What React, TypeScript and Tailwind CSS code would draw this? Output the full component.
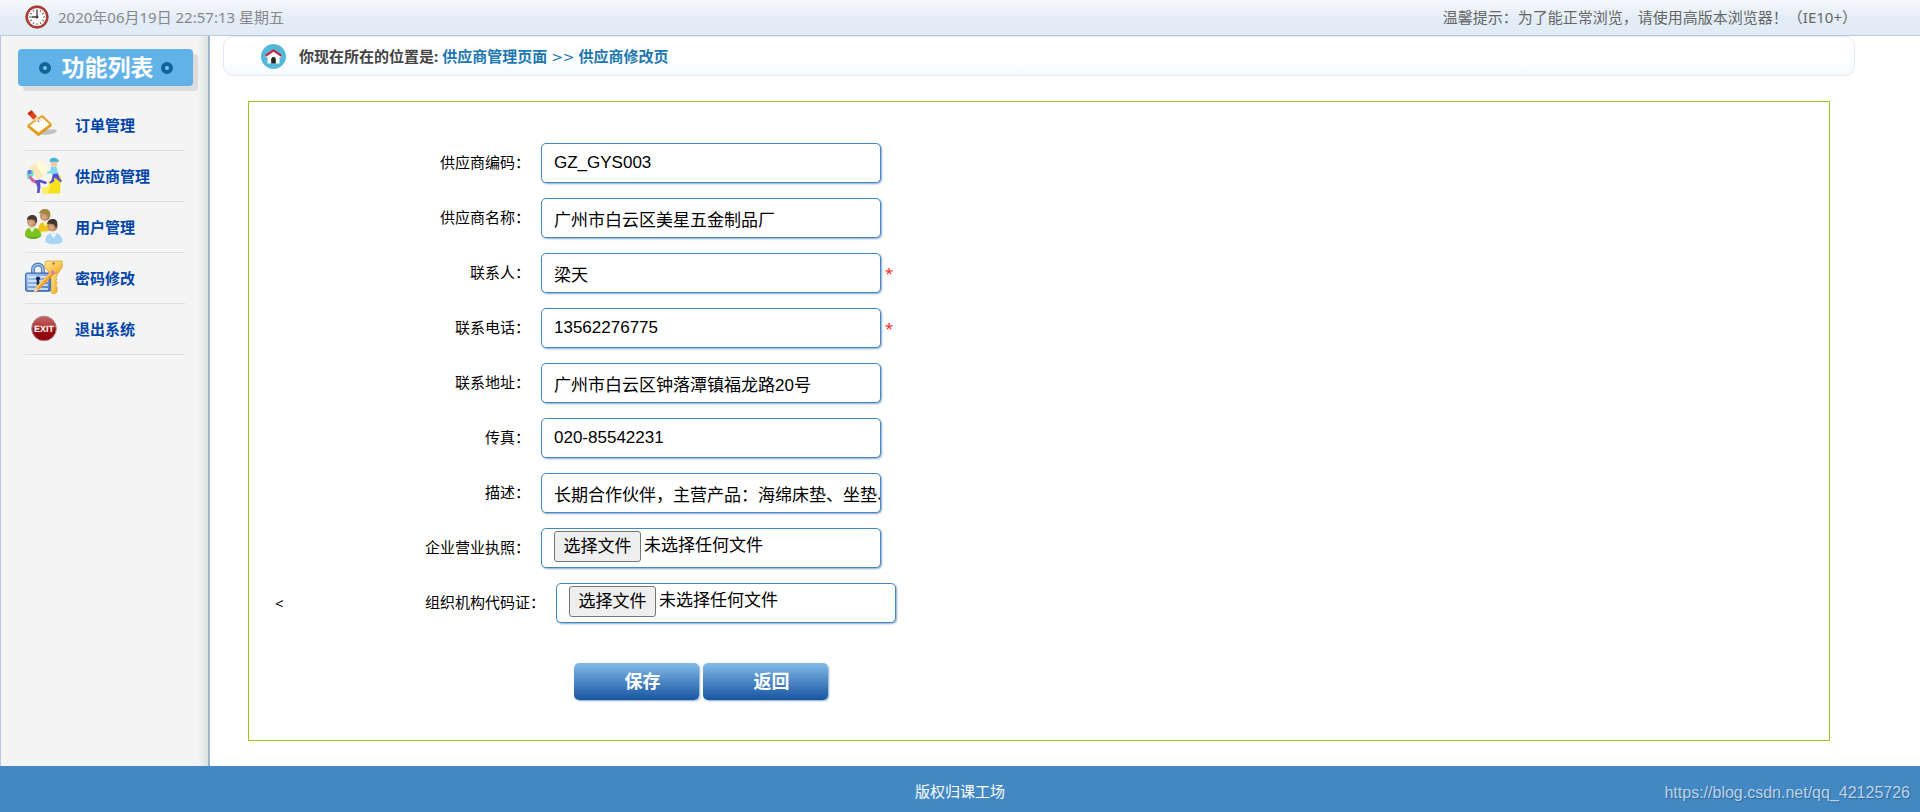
import { useRef, useState } from "react";
import type { ReactNode } from "react";

function ClockIcon() {
  const ticks = [0, 30, 60, 90, 120, 150, 180, 210, 240, 270, 300, 330];
  return (
    <svg viewBox="0 0 24 24" className="size-6" aria-hidden="true">
      <circle cx="12" cy="12" r="10.2" fill="#fdfdfd" stroke="#b23a30" strokeWidth="2.200" />
      <circle cx="12" cy="12" r="11.3" fill="none" stroke="#8e2b25" strokeWidth="0.600" />
      {ticks.map((a) => (
        <line key={a} x1="12" y1="4" x2="12" y2="6" stroke="#666" strokeWidth="1" transform={`rotate(${a} 12 12)`} />
      ))}
      <path d="M12 5.500V12H6.500" fill="none" stroke="#3d3d3d" strokeWidth="1.300" />
      <circle cx="12" cy="12" r="1.500" fill="#4a3a3a" />
    </svg>
  );
}

function HomeIcon() {
  return (
    <svg viewBox="0 0 25 25" className="size-[25px]" aria-hidden="true">
      <circle cx="12.5" cy="12.5" r="12.5" fill="#53b8d8" />
      <path d="M6.5 12 12.5 7.500l6 4.500v7.500h-12z" fill="#fff" />
      <path d="M4.800 12.800 12.500 7l7.700 5.800" fill="none" stroke="#fff" strokeWidth="2.500" />
      <path d="M4.600 11.800 12.500 6.500l7.900 5.300" fill="none" stroke="#c8183c" strokeWidth="2" />
      <path d="M10.200 19.500v-4.300a2.300 2.300 0 0 1 4.600 0v4.300z" fill="#222" />
    </svg>
  );
}

function OrderIcon() {
  return (
    <svg viewBox="0 0 38 38" className="size-[38px]" aria-hidden="true">
      <ellipse cx="23" cy="26" rx="9" ry="2.600" fill="#b5b5b5" opacity="0.800" transform="rotate(-8 23 26)" />
      <path d="M3 19.500 17 10 26 18.500 13.500 27.500z" fill="#fffdf6" stroke="#eaa126" strokeWidth="2" strokeLinejoin="round" />
      <path d="M3 20.500 13.500 29 26 19.500" fill="none" stroke="#e09a1c" strokeWidth="2" strokeLinejoin="round" />
      <path d="m14 12.500 2 2m.5-3.500 2 2m.5-2.500 1.500 2" stroke="#c9a36a" strokeWidth="1" />
      <path d="m2.500 7.500 4-3.200 5.500 6.200-3.500 3.300z" fill="#e2401b" />
      <path d="m2.500 7.500 4-3.200 1.600 2-3.800 3z" fill="#c22a10" />
      <path d="m8.500 13.800 3.500-3.300 2.600 6z" fill="#f6d19b" />
      <path d="m13.200 15.200.6-.9.800 2.200z" fill="#333" />
    </svg>
  );
}

function SupplierIcon() {
  return (
    <svg viewBox="0 0 38 38" className="size-[38px]" aria-hidden="true">
      <path d="M17 36.500v-6h6v-6h6v-4l6-2.500 1 2-1 16.500z" fill="#f6e21c" />
      <path d="M17 36.500v-6h6v-6h4l-2 6-3 6z" fill="#fbf06a" />
      <path d="M4 10.500 17 3l7 12-11.500 8z" fill="#fbe8b8" />
      <path d="M17 3l7 12-6 4-7.500-12.500z" fill="#fffbd8" />
      <path d="M1.500 17c1-3.500 4-5 6.500-3.500l1 4-3.500 4-3 1z" fill="#6fe0c8" />
      <path d="m4.500 18 5.500 5 3 1.500-1 2.500-5-2-3-4z" fill="#d65fa8" />
      <circle cx="4.500" cy="15" r="2.200" fill="#6a7be8" />
      <path d="m10 23.500 5-1 7 2.500-1 2.200-6-1.700.5 4.500-1 6h-2.500l.5-5.500z" fill="#5a50c8" />
      <circle cx="29" cy="6.500" r="3.400" fill="#f7caa0" />
      <path d="M24.500 4.800c0-3 2.500-4.500 5.500-3.800 2.800.5 4 2 3.800 4l-4.800-.3z" fill="#41b4dc" />
      <path d="m26 9.800 5.500.2 2 7-5 2-3-3-3 1-.8-2 3.500-1z" fill="#7ed9ee" />
      <path d="m28 17 5-.5 1.500 4.500 2.500 3-1.500 1.200-4-3.500-2.500-1 .3 3.500-4 2.500-1-1.200 2.200-2.500z" fill="#5650d0" />
    </svg>
  );
}

function UsersIcon() {
  return (
    <svg viewBox="0 0 38 38" className="size-[38px]" aria-hidden="true">
      <defs>
        <radialGradient id="skin" cx="0.400" cy="0.600" r="0.700">
          <stop offset="0" stopColor="#e6b48c" />
          <stop offset="1" stopColor="#9a6a48" />
        </radialGradient>
      </defs>
      <path d="M13 24c-.5-6 2.500-10 6.500-10s6 4 6 9z" fill="#f0c517" />
      <path d="m18 14 2.500 5 2-5z" fill="#fff3c0" />
      <circle cx="20" cy="8" r="5" fill="url(#skin)" />
      <path d="M14 5.500c1-4 4.500-5 7-4.500 3.500.7 5 3.500 4.300 7L23.500 10c0-3.500-3-5-9.500-4.500z" fill="#a5883f" />
      <path d="M0 28c-.5-6 2.500-8.500 7-8.500 5.500 0 9 3 9.500 8.500-4.500 3.800-12 3.800-16.500 0z" fill="#7ec31f" />
      <path d="m4.500 20 2.500 4.500 3-4.500z" fill="#e9f7d0" />
      <path d="M1 28c4 2 10 2 14.500 0-4 3.500-11 3.500-14.500 0z" fill="#4e9010" />
      <circle cx="7" cy="14" r="4.800" fill="url(#skin)" />
      <path d="M2 12c0-3.500 2.500-5 5.500-5s5.500 2.500 4.500 7l-1.500.8c0-3-3-3.800-8.500-2.800z" fill="#4a3b33" />
      <path d="M20.500 34c-.5-6.500 3-9 8-9 5.500 0 9 3 9 9-4.500 3-12.500 3-17 0z" fill="#a9d4f8" />
      <path d="m25.500 25.500 3 5 3-5z" fill="#f4faff" />
      <circle cx="27.500" cy="18.500" r="5" fill="url(#skin)" />
      <path d="M22 16c.5-4 3.500-5.500 6.500-5 3.500.5 4.500 3.500 3.500 8l-1.500 1c0-3.500-3-4.800-8.500-4z" fill="#43352e" />
    </svg>
  );
}

function PasswordIcon() {
  return (
    <svg viewBox="0 0 38 38" className="size-[38px]" aria-hidden="true">
      <defs>
        <linearGradient id="lockBody" x1="0" y1="0" x2="1" y2="1">
          <stop offset="0" stopColor="#b8d4f8" />
          <stop offset="1" stopColor="#4479c8" />
        </linearGradient>
        <linearGradient id="keyBody" x1="0" y1="0" x2="1" y2="1">
          <stop offset="0" stopColor="#ffee9a" />
          <stop offset="1" stopColor="#efa920" />
        </linearGradient>
      </defs>
      <path d="M8 15v-4.500a5 5 0 0 1 10 0V15" fill="none" stroke="#4b77b8" strokeWidth="3.800" />
      <path d="M8 15v-4.500a5 5 0 0 1 10 0V15" fill="none" stroke="#a7c6ee" strokeWidth="1.600" />
      <path d="M26 13h6v4l-1.200 1.500L32 20l-1.200 2 1.200 2-1.200 2 1.200 2v5l-3 2-3-1.500z" fill="url(#keyBody)" stroke="#d9951c" strokeWidth="0.700" />
      <rect x="0.700" y="14.200" width="24.500" height="18" rx="2" fill="url(#lockBody)" stroke="#3563ad" strokeWidth="1.200" />
      <path d="M3 18h20M3 22h20M3 26h20M3 30h20" stroke="#e4effd" strokeWidth="1.300" />
      <path d="M13 17.500a2 2 0 0 1 1.300 3.600V26h-2.600v-4.900a2 2 0 0 1 1.300-3.600z" fill="#152c55" />
      <path d="M20.500 2h16.500l.6 5.500L33 14.500h-8L19.500 8z" fill="url(#keyBody)" stroke="#d9a52c" strokeWidth="0.800" strokeLinejoin="round" />
      <circle cx="28.500" cy="4.500" r="1.200" fill="#a87716" />
      <path d="m8.500 33.500 2-5L26 12.500l3 3-15.500 15.500z" fill="#f59a22" />
      <path d="M10.500 28.500 26 12.500l1.200 1.200L11.800 30z" fill="#ffc765" />
      <path d="m8.500 33.500 2-5 3 2.500z" fill="#f6d9ae" />
      <path d="m25.500 13 2-2 3 3-2 2z" fill="#d77bc0" />
    </svg>
  );
}

function ExitIcon() {
  return (
    <svg viewBox="0 0 38 38" className="size-[38px]" aria-hidden="true">
      <defs>
        <linearGradient id="exitFill" x1="0" y1="0" x2="0" y2="1">
          <stop offset="0" stopColor="#c46a6a" />
          <stop offset="0.450" stopColor="#b03434" />
          <stop offset="0.550" stopColor="#9b0c10" />
          <stop offset="1" stopColor="#8c0509" />
        </linearGradient>
      </defs>
      <circle cx="19" cy="18.500" r="12.300" fill="url(#exitFill)" stroke="#a98686" strokeWidth="1" />
      <text x="19" y="22" textAnchor="middle" fontSize="9" fontWeight="700" fill="#fff" fontFamily="Liberation Sans Narrow, Liberation Sans, sans-serif" textRendering="geometricPrecision">
        EXIT
      </text>
    </svg>
  );
}

function Dot() {
  return <span className="size-3 rounded-full border-4 border-[#12659a] bg-[#7fc4ec]" />;
}

const menu: { label: string; icon: ReactNode }[] = [
  { label: "订单管理", icon: <OrderIcon /> },
  { label: "供应商管理", icon: <SupplierIcon /> },
  { label: "用户管理", icon: <UsersIcon /> },
  { label: "密码修改", icon: <PasswordIcon /> },
  { label: "退出系统", icon: <ExitIcon /> },
];

const fields = [
  { id: "code", label: "供应商编码：", value: "GZ_GYS003", required: false },
  { id: "name", label: "供应商名称：", value: "广州市白云区美星五金制品厂", required: false },
  { id: "contact", label: "联系人：", value: "梁天", required: true },
  { id: "phone", label: "联系电话：", value: "13562276775", required: true },
  { id: "address", label: "联系地址：", value: "广州市白云区钟落潭镇福龙路20号", required: false },
  { id: "fax", label: "传真：", value: "020-85542231", required: false },
  { id: "desc", label: "描述：", value: "长期合作伙伴，主营产品：海绵床垫、坐垫、靠垫", required: false },
];

const labelClass = "w-64 shrink-0 pb-0.5 text-right";
const boxClass =
  "h-10 w-[340px] rounded-[5px] border border-[#4288c3] bg-white pl-3 text-[17px] text-black shadow-[1px_1px_2px_#8aa9c8] font-['Liberation_Sans','Noto_Sans_CJK_SC',sans-serif]";

function FileField({ id, label, prefix }: { id: string; label: string; prefix?: string }) {
  const input = useRef<HTMLInputElement>(null);
  const [file, setFile] = useState("未选择任何文件");
  return (
    <div className="flex items-center">
      {prefix && <span className="w-[15px] pl-px">{prefix}</span>}
      <label htmlFor={id} className={labelClass}>
        {label}
      </label>
      <div className={`ml-[11px] flex items-start gap-[3px] pt-0.5 ${boxClass}`}>
        <input
          ref={input}
          id={id}
          type="file"
          className="hidden"
          onChange={(e) => setFile(e.target.files?.[0]?.name ?? "未选择任何文件")}
        />
        <button
          type="button"
          onClick={() => input.current?.click()}
          className="h-[31px] w-[87px] shrink-0 rounded-[3px] border border-[#767676] bg-[#efefef] leading-[29px]"
        >
          选择文件
        </button>
        <span className="truncate leading-[29px]">{file}</span>
      </div>
    </div>
  );
}

const actionClass =
  "h-[37px] w-[125px] rounded-[5px] bg-linear-to-b from-[#82bbe8] to-[#1655a0] pb-0.5 pl-3 text-lg leading-7 font-bold text-white shadow-[1px_1px_2px_#8aa9c8]";

export default function App() {
  return (
    <div className="flex min-h-screen flex-col bg-white font-['Noto_Sans','Noto_Sans_CJK_SC',sans-serif] text-[15px] leading-5 text-black">
      <header className="flex h-9 items-center justify-between border-b border-[#b9c9da] bg-linear-to-b from-[#f6f9fb] via-[#e4edf7] to-[#e0ecf5] pr-[63px] pb-0.5 pl-[25px]">
        <div className="flex items-center gap-[9px] text-[#888]">
          <ClockIcon />
          <span>2020年06月19日 22:57:13 星期五</span>
        </div>
        <p className="text-[#666] [text-spacing-trim:space-all]">温馨提示：为了能正常浏览，请使用高版本浏览器！（IE10+）</p>
      </header>

      <div className="flex flex-1">
        <nav className="flex w-[210px] shrink-0 flex-col border-r-2 border-l border-r-[#9fb4ce] border-l-[#b9c6e2] bg-linear-to-r from-[#f4f4f4] from-95% to-[#dfe2e2] pt-[13px] pl-[17px]">
          <h2 className="flex h-[37px] w-[175px] items-center justify-center gap-[7px] rounded-[4px] bg-[#61b2e7] text-[23px] leading-8 font-bold text-white shadow-[5px_5px_0_#dcdcdc]">
            <Dot />
            <span className="pb-0.5 pl-1">功能列表</span>
            <Dot />
          </h2>
          <ul className="mt-[14px] ml-[7px] w-40">
            {menu.map((m) => (
              <li key={m.label} className="border-b border-[#dedede]">
                <a href="#" className="flex h-[50px] items-center gap-3 font-bold text-[#0045a8]">
                  {m.icon}
                  {m.label}
                </a>
              </li>
            ))}
          </ul>
        </nav>

        <main className="min-w-0 flex-1 pb-6 pl-[13px]">
          <div className="mr-[65px] flex h-10 items-center rounded-[10px] border border-[#e3e8f5] bg-linear-to-b from-white from-50% to-[#f6faff] pl-[37px] font-bold text-[#444]">
            <HomeIcon />
            <span className="ml-[13px]">你现在所在的位置是:</span>
            <span className="ml-1 text-[#1d78b0]">
              供应商管理页面{" "}
              <span className="font-['DejaVu_Sans',sans-serif] text-sm font-normal">&gt;&gt;</span>{" "}
              供应商修改页
            </span>
          </div>

          <form
            className="mt-[25px] mr-[90px] ml-[25px] flex flex-col gap-[15px] border border-[#9ac812] pt-[41px] pb-10 pl-[25px]"
            onSubmit={(e) => e.preventDefault()}
          >
            {fields.map((f) => (
              <div key={f.id} className="flex items-center">
                <label htmlFor={f.id} className={labelClass}>
                  {f.label}
                </label>
                <input id={f.id} type="text" defaultValue={f.value} className={`ml-[11px] ${boxClass}`} />
                {f.required && <span className="ml-1 text-[#ff2a1a]">*</span>}
              </div>
            ))}
            <FileField id="license" label="企业营业执照：" />
            <FileField id="orgcode" label="组织机构代码证：" prefix="<" />
            <div className="mt-[25px] ml-[300px] flex gap-1">
              <button type="submit" className={actionClass}>
                保存
              </button>
              <button type="button" className={actionClass}>
                返回
              </button>
            </div>
          </form>
        </main>
      </div>

      <footer className="grid h-[46px] grid-cols-3 items-center bg-[#4288c3] pt-1 text-white">
        <p className="col-start-2 text-center">版权归课工场</p>
        <p className="pt-1 pr-[10px] text-right font-['Liberation_Sans',sans-serif] text-base leading-5 text-[#bdd3e8] text-shadow-[1px_1px_1px_#2f6595]">
          https://blog.csdn.net/qq_42125726
        </p>
      </footer>
    </div>
  );
}
